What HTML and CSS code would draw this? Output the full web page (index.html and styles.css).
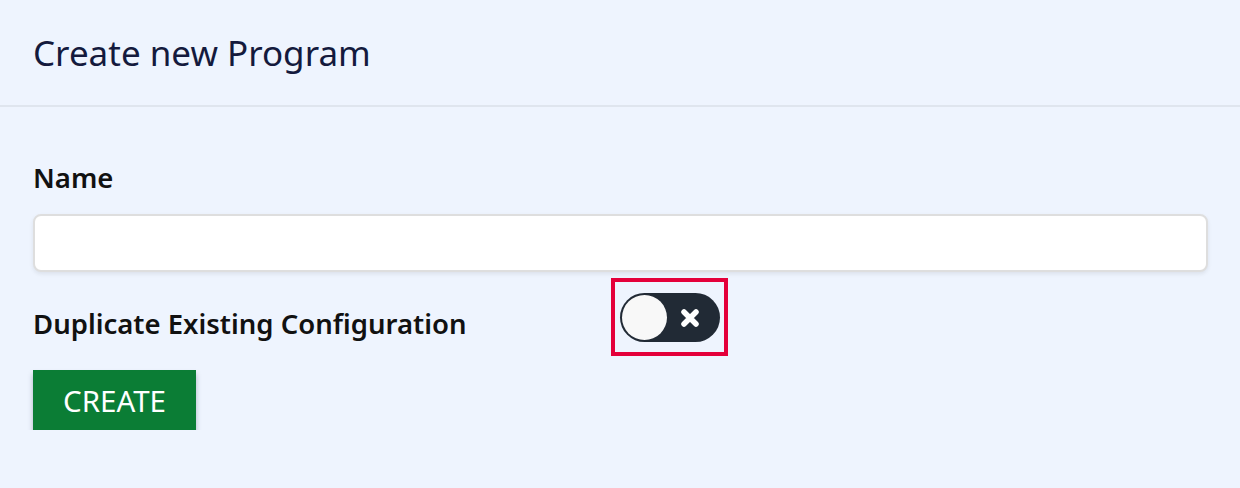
FILE: index.html
```html
<!DOCTYPE html>
<html lang="en">
<head>
    <meta charset="UTF-8">
    <meta name="viewport" content="width=device-width, initial-scale=1.0">
    <title>Create new Program</title>
    <link rel="stylesheet" href="styles.css">
</head>
<body>
    <div class="modal">
        <div class="modal-header">
            <h2 class="modal-title">Create new Program</h2>
        </div>
        <form class="modal-body">
            <label class="field-label" for="programName">Name</label>
            <input type="text" id="programName" class="text-input">
            <div class="toggle-row">
                <span class="field-label toggle-label">Duplicate Existing Configuration</span>
                <div class="highlight">
                    <button type="button" class="switch" aria-pressed="false">
                        <span class="knob"></span>
                        <svg class="cross" width="20" height="20" viewBox="0 0 20 20">
                            <path d="M4 4 L16 16 M16 4 L4 16" stroke="#fff" stroke-width="5.5" stroke-linecap="round"/>
                        </svg>
                    </button>
                </div>
            </div>
            <button type="submit" class="button">CREATE</button>
        </form>
    </div>
</body>
</html>
```

FILE: styles.css
```css
body {
    font-family: "Noto Sans", "Open Sans", sans-serif;
    background-color: #eef4fe;
    margin: 0;
    padding: 0;
}

.modal-header {
    height: 105px;
    border-bottom: 2px solid #dfe5ee;
    padding: 0 33px;
    display: flex;
    align-items: center;
}

.modal-title {
    margin: 0;
    font-size: 35px;
    font-weight: 400;
    color: #141a3d;
}

.modal-body {
    padding: 52px 33px 0 33px;
    display: flex;
    flex-direction: column;
    align-items: flex-start;
}

.field-label {
    font-size: 27.5px;
    font-weight: 600;
    color: #111;
}

.toggle-label {
    width: 578px;
    padding-top: 12px;
}

.text-input {
    box-sizing: border-box;
    width: 1175px;
    height: 58px;
    margin-top: 18px;
    border: 2px solid #dedede;
    border-radius: 8px;
    background: #fff;
    box-shadow: 0 2px 4px rgba(0, 0, 0, 0.08);
    font-size: 24px;
}

.toggle-row {
    display: flex;
    align-items: center;
    margin-top: 6px;
}

.highlight {
    border: 4px solid #e4003a;
    padding: 11px 4px 10px 5px;
}

.switch {
    box-sizing: border-box;
    width: 100px;
    height: 49px;
    border: none;
    border-radius: 25px;
    background-color: #212a35;
    padding: 0 20px 0 2px;
    display: flex;
    align-items: center;
    justify-content: space-between;
    cursor: pointer;
}

.knob {
    width: 45px;
    height: 45px;
    border-radius: 50%;
    background-color: #f8f8f8;
}

.cross {
    display: block;
}

.button {
    margin-top: 14px;
    width: 163px;
    height: 60px;
    background-color: #0b7d35;
    border: none;
    color: #fff;
    font-family: "Noto Sans", "Open Sans", sans-serif;
    font-size: 29.5px;
    box-shadow: 0 4px 5px rgba(50, 60, 90, 0.35);
    cursor: pointer;
}
```
